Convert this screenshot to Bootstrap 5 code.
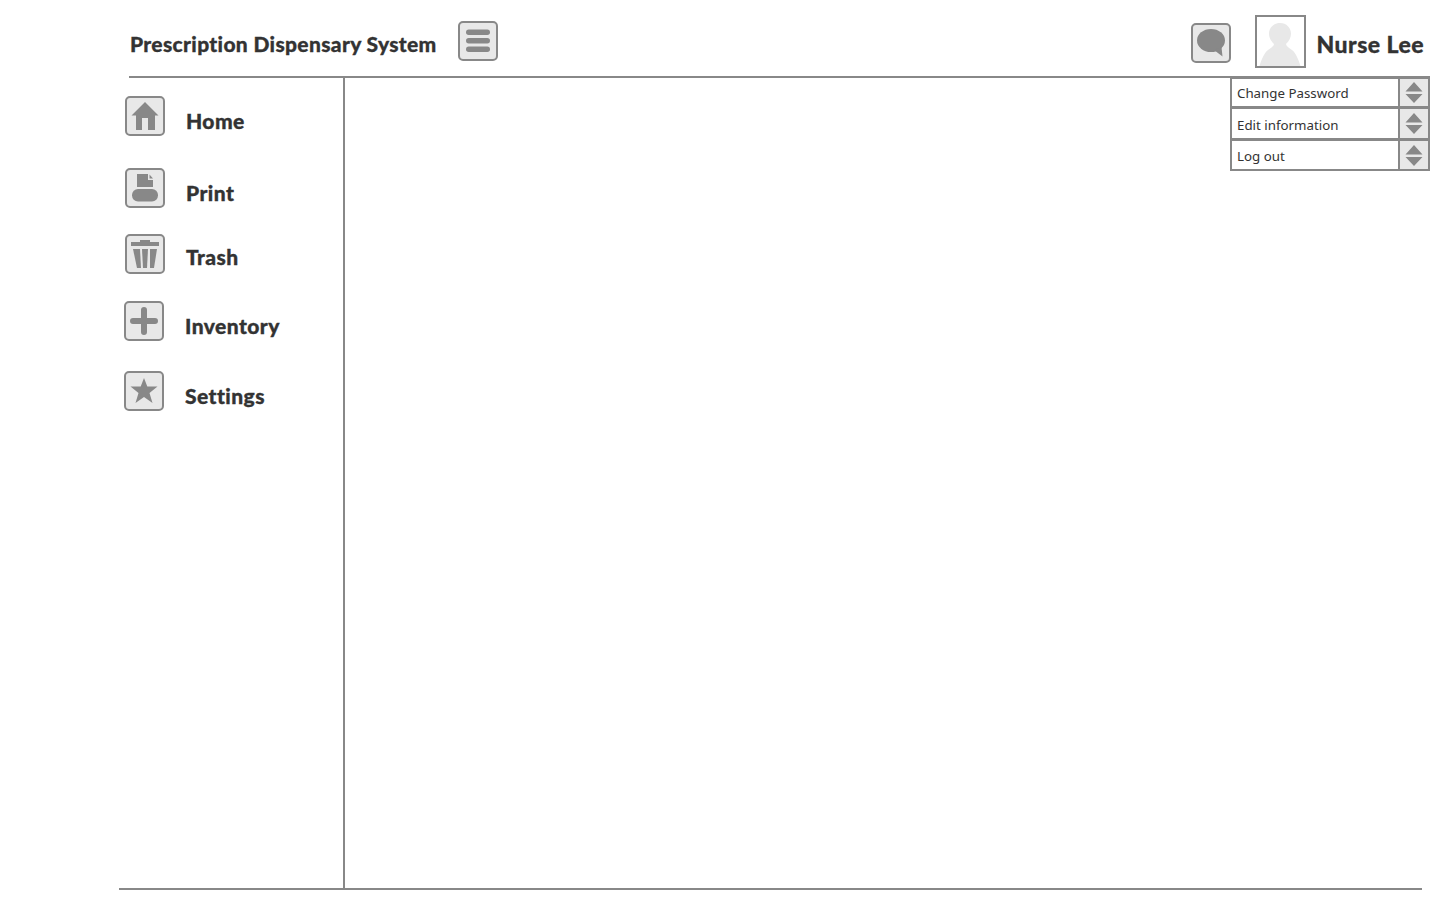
<!DOCTYPE html>
<html lang="en">
<head>
<meta charset="utf-8">
<title>Prescription Dispensary System</title>
<link href="https://cdn.jsdelivr.net/npm/bootstrap@5.3.0/dist/css/bootstrap.min.css" rel="stylesheet">
<style>
body{background:#fff;color:#333;font-family:"Lato","Liberation Sans",sans-serif;overflow:hidden;font-variant-ligatures:none;}
.canvas{width:1450px;height:910px;position:relative;}
.topbar{margin-left:129px;width:1301px;height:78px;border-bottom:2px solid #888;}
.app-title{font-size:21px;font-weight:900;line-height:1;margin:33px 0 0 1px;letter-spacing:.34px;white-space:nowrap;-webkit-text-stroke:.3px #333;}
.icon-box{width:40px;height:40px;flex:none;background:#e8e8e8;border:2px solid #888;border-radius:5px;display:flex;align-items:center;justify-content:center;padding:0;}
.icon-box svg{display:block;}
.menu-toggle{margin:21px 0 0 21px;}
.chat-btn{margin:23px 0 0 auto;}
.avatar-box{width:51px;height:53px;margin:15px 0 0 24px;border:2px solid #888;background:#fff;flex:none;}
.avatar-box svg{display:block;}
.user-name{font-size:23px;font-weight:900;line-height:1;margin:33px 6px 0 11px;letter-spacing:.45px;white-space:nowrap;-webkit-text-stroke:.3px #333;}
.work-area{margin-left:119px;width:1303px;height:812px;border-bottom:2px solid #888;}
.side-col{width:226px;height:810px;border-right:2px solid #888;padding-top:18px;}
.side-item{display:flex;gap:21px;align-items:flex-start;font-size:21px;font-weight:900;line-height:1;letter-spacing:.45px;-webkit-text-stroke:.35px #333;}
.side-item span{display:block;}
.si-home{margin-left:6px;}.si-home span{margin-top:14px;}
.si-print{margin:32px 0 0 6px;}.si-print span{margin-top:14px;}
.si-trash{margin:26px 0 0 6px;}.si-trash span{margin-top:12px;}
.si-inv{margin:27px 0 0 5px;}.si-inv span{margin-top:14px;}
.si-set{margin:30px 0 0 5px;}.si-set span{margin-top:14px;}
.user-menu{position:absolute;left:1230px;top:77px;width:200px;}
.menu-row{display:flex;background:#fff;border:solid #888;border-width:0 2px 3px;font-family:"Noto Sans","Liberation Sans",sans-serif;font-size:13.3px;color:#333;}
.menu-row.r1{height:32px;border-top-width:2px;}
.menu-row.r2{height:32px;}
.menu-row.r3{height:30px;border-bottom-width:2px;}
.menu-text{flex:1;line-height:20px;white-space:nowrap;padding-left:5px;}
.r1 .menu-text{padding-top:4px;}
.r2 .menu-text{padding-top:6px;}
.r3 .menu-text{padding-top:5px;}
.spin-cell{width:30px;flex:none;background:#e8e8e8;border-left:2px solid #888;display:flex;align-items:center;justify-content:center;}
</style>
</head>
<body>
<div class="canvas">
  <header class="topbar d-flex align-items-start">
    <div class="app-title">Prescription Dispensary System</div>
    <button class="icon-box menu-toggle" type="button" aria-label="Menu">
      <svg width="26" height="26" viewBox="0 0 26 26"><g fill="#888"><rect x="1" y="1.500" width="24" height="5.500" rx="2.750"/><rect x="1" y="10" width="24" height="5.500" rx="2.750"/><rect x="1" y="18.500" width="24" height="5.500" rx="2.750"/></g></svg>
    </button>
    <button class="icon-box chat-btn" type="button" aria-label="Messages">
      <svg width="30" height="30" viewBox="0 0 30 30"><ellipse cx="15" cy="12.500" rx="14" ry="11.500" fill="#888"/><path fill="#888" d="M18 22L26.500 28.500L25.500 19Z"/></svg>
    </button>
    <div class="avatar-box" role="img" aria-label="User picture">
      <svg width="47" height="49" viewBox="0 0 47 49"><path fill="#e8e8e8" d="M23 6C29.500 6 34 11 34 16.500C34 21 32 24 29 27C29 29 32 31 35 33C39 36 42 44 43.500 49H2.500C4 44 7 36 11 33C14 31 17 29 17 27C14 24 12 21 12 16.500C12 11 16.500 6 23 6Z"/></svg>
    </div>
    <div class="user-name">Nurse Lee</div>
  </header>

  <div class="work-area d-flex">
    <nav class="side-col">
      <div class="side-item si-home">
        <div class="icon-box"><svg width="30" height="30" viewBox="0 0 30 30"><path fill="#888" d="M15 1L28.500 14.500H25V29H18V17H12V29H6V14.500H1.500Z"/></svg></div>
        <span>Home</span>
      </div>
      <div class="side-item si-print">
        <div class="icon-box"><svg width="28" height="32" viewBox="0 0 28 32"><g fill="#888"><path d="M6 2H17V8H22V15H6Z"/><path d="M18.500 2.500L22 6.500H18.500Z"/><rect x="1" y="17" width="26" height="12.500" rx="6"/></g></svg></div>
        <span>Print</span>
      </div>
      <div class="side-item si-trash">
        <div class="icon-box"><svg width="30" height="32" viewBox="0 0 30 32"><g fill="#888"><rect x="1" y="4" width="28" height="4"/><rect x="10" y="2" width="10" height="3"/><path d="M3 11H10L11 30H7Z"/><path d="M12 11H18L17 30H13Z"/><path d="M20 11H27L24 30H20Z"/></g></svg></div>
        <span>Trash</span>
      </div>
      <div class="side-item si-inv">
        <div class="icon-box"><svg width="30" height="30" viewBox="0 0 30 30"><path fill="none" stroke="#888" stroke-width="6" stroke-linecap="round" d="M15 4V26M4 15H26"/></svg></div>
        <span>Inventory</span>
      </div>
      <div class="side-item si-set">
        <div class="icon-box"><svg width="30" height="30" viewBox="0 0 30 30"><path fill="#888" d="M15 2L18.300 10.500H28.500L20.500 17L23.500 27L15 21L6.500 27L9.500 17L1.500 10.500H11.700Z"/></svg></div>
        <span>Settings</span>
      </div>
    </nav>
    <main class="flex-grow-1"></main>
  </div>

  <div class="user-menu">
    <div class="menu-row r1"><div class="menu-text">Change Password</div><div class="spin-cell"><svg width="18" height="21" viewBox="0 0 18 21"><path fill="#888" d="M9 0L17.500 9.500H.5Z M.5 12H17.500L9 21Z"/></svg></div></div>
    <div class="menu-row r2"><div class="menu-text">Edit information</div><div class="spin-cell"><svg width="18" height="21" viewBox="0 0 18 21"><path fill="#888" d="M9 0L17.500 9.500H.5Z M.5 12H17.500L9 21Z"/></svg></div></div>
    <div class="menu-row r3"><div class="menu-text">Log out</div><div class="spin-cell"><svg width="18" height="21" viewBox="0 0 18 21"><path fill="#888" d="M9 0L17.500 9.500H.5Z M.5 12H17.500L9 21Z"/></svg></div></div>
  </div>
</div>
<script src="https://cdn.jsdelivr.net/npm/bootstrap@5.3.0/dist/js/bootstrap.bundle.min.js"></script>
</body>
</html>
